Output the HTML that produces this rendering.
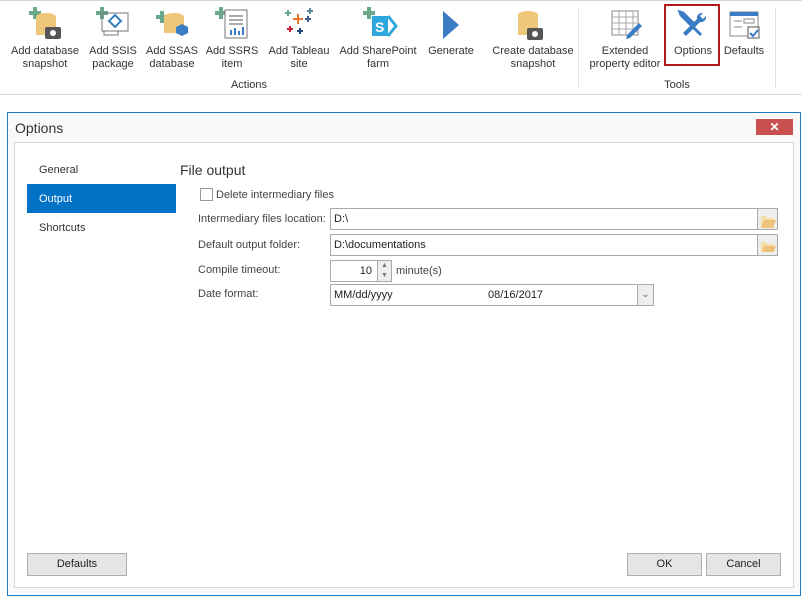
<!DOCTYPE html>
<html><head><meta charset="utf-8"><style>
*{box-sizing:border-box;margin:0;padding:0}
body{width:802px;height:596px;background:#fff;font-family:"Liberation Sans",sans-serif;font-size:11px;color:#222;position:relative;overflow:hidden}
.ab{position:absolute}
.rb{position:absolute;top:0;left:0;width:802px;height:95px;border-top:1px solid #d6d6d6;border-bottom:1px solid #d6d6d6;background:#fff}
.btn{position:absolute;top:45px;width:100px;text-align:center;font-size:11px;line-height:13px;color:#333;white-space:nowrap}
.lab{font-size:11px;color:#444}
.inp{position:absolute;height:22px;border:1px solid #a9a9a9;background:#fff;font-size:11px;line-height:20px;padding-left:3px;color:#222}
.fb{position:absolute;width:21px;height:22px;border:1px solid #a9a9a9;background:#eee}
.pb{position:absolute;height:23px;border:1px solid #adadad;background:#e5e5e5;text-align:center;line-height:21px;font-size:11px}
</style></head><body>
<div class="rb"></div>
<div class="ab" style="left:578px;top:8px;width:1px;height:80px;background:#e0e0e0"></div>
<div class="ab" style="left:775px;top:8px;width:1px;height:80px;background:#e0e0e0"></div>
<svg class="ab" style="left:0;top:0" width="802" height="44">
<g fill="#6aa788"><rect x="33" y="7" width="4" height="12"/><rect x="29" y="11" width="12" height="4"/>
<rect x="100" y="7" width="4" height="12"/><rect x="96" y="11" width="12" height="4"/>
<rect x="160" y="11" width="4" height="12"/><rect x="156" y="15" width="12" height="4"/>
<rect x="219" y="7" width="4" height="12"/><rect x="215" y="11" width="12" height="4"/>
<rect x="367" y="7" width="4" height="12"/><rect x="363" y="11" width="12" height="4"/></g>
<ellipse cx="46" cy="17" rx="10" ry="4" fill="#f0c674"/><rect x="36" y="17" width="20" height="18" fill="#efc77a"/>
<rect x="45" y="27" width="16" height="12" rx="2" fill="#555"/><circle cx="53" cy="33" r="3" fill="#fff"/>
<rect x="102" y="13" width="26" height="18" fill="none" stroke="#777"/><rect x="104" y="31" width="14" height="4" fill="none" stroke="#777"/>
<path d="M115 15l6 6-6 6-6-6z" fill="none" stroke="#3b7dc4" stroke-width="2"/>
<ellipse cx="174" cy="17" rx="10" ry="4" fill="#f0c674"/><rect x="164" y="17" width="20" height="16" fill="#efc77a"/>
<path d="M182 24l6 3v6l-6 3-6-3v-6z" fill="#3b7dc4"/>
<rect x="225" y="10" width="22" height="28" fill="#fff" stroke="#777"/>
<g stroke="#555"><line x1="229" y1="16" x2="243" y2="16"/><line x1="229" y1="20" x2="243" y2="20"/><line x1="229" y1="24" x2="243" y2="24"/></g>
<g fill="#3b7dc4"><rect x="230" y="30" width="2" height="5"/><rect x="234" y="28" width="2" height="7"/><rect x="238" y="31" width="2" height="4"/><rect x="242" y="27" width="2" height="8"/></g>
<g stroke-width="2"><path d="M298 14v10M293 19h10" stroke="#e8762d"/><path d="M288 10v6M285 13h6" stroke="#6aa788"/><path d="M308 16v6M305 19h6" stroke="#3b5c8c"/><path d="M290 26v6M287 29h6" stroke="#c72037"/><path d="M300 28v6M297 31h6" stroke="#1f457e"/><path d="M310 8v6M307 11h6" stroke="#5b879b"/></g>
<rect x="372" y="16" width="16" height="20" fill="#2ea7dc"/><text x="375" y="32" font-size="14" fill="#fff" font-weight="bold" font-family="Liberation Sans">S</text>
<path d="M388 16l8 10-8 10" fill="none" stroke="#2ea7dc" stroke-width="3"/>
<path d="M443 11l16 14-16 14z" fill="#3b7dc4"/>
<ellipse cx="528" cy="15" rx="10" ry="4" fill="#f0c674"/><rect x="518" y="15" width="20" height="20" fill="#efc77a"/>
<rect x="527" y="28" width="16" height="12" rx="2" fill="#555"/><circle cx="535" cy="34" r="3" fill="#fff"/>
<rect x="612" y="11" width="26" height="24" fill="none" stroke="#888"/>
<g stroke="#aaa"><line x1="612" y1="17" x2="638" y2="17"/><line x1="612" y1="23" x2="638" y2="23"/><line x1="612" y1="29" x2="638" y2="29"/><line x1="619" y1="11" x2="619" y2="35"/><line x1="626" y1="11" x2="626" y2="35"/><line x1="633" y1="11" x2="633" y2="35"/></g>
<path d="M627 35l12-12 3 3-12 12-4 1z" fill="#3b7dc4"/>
<path d="M703 13a5 5 0 0 0-6 6l-14 14 3 3 14-14a5 5 0 0 0 6-6l-3 3-3-3z" fill="#3b7dc4"/>
<path d="M680 12l3 1 9 9-2 2-9-9z M692 26l9 9" stroke="#3b7dc4" stroke-width="3" fill="none"/>
<rect x="730" y="12" width="28" height="24" fill="#fff" stroke="#888"/><rect x="730" y="12" width="28" height="4" fill="#3b7dc4"/>
<g stroke="#888"><line x1="734" y1="21" x2="742" y2="21"/><rect x="744" y="19" width="10" height="4" fill="none"/><line x1="734" y1="27" x2="742" y2="27"/></g>
<rect x="748" y="27" width="11" height="11" fill="#fff" stroke="#555"/><path d="M750 33l3 3 5-6" stroke="#3b7dc4" stroke-width="2" fill="none"/>
</svg>
<div class="btn" style="left:-5px">Add database<br>snapshot</div>
<div class="btn" style="left:63px">Add SSIS<br>package</div>
<div class="btn" style="left:122px">Add SSAS<br>database</div>
<div class="btn" style="left:182px">Add SSRS<br>item</div>
<div class="btn" style="left:249px">Add Tableau<br>site</div>
<div class="btn" style="left:328px">Add SharePoint<br>farm</div>
<div class="btn" style="left:401px">Generate</div>
<div class="btn" style="left:483px">Create database<br>snapshot</div>
<div class="btn" style="left:575px">Extended<br>property editor</div>
<div class="btn" style="left:643px">Options</div>
<div class="btn" style="left:694px">Defaults</div>
<div class="ab" style="left:664px;top:4px;width:56px;height:62px;border:2px solid #b31b1b"></div>
<div class="btn" style="left:199px;top:79px">Actions</div>
<div class="btn" style="left:627px;top:79px">Tools</div>
<div class="ab" style="left:7px;top:112px;width:794px;height:484px;border:1px solid #1a7bc9;background:#f9f9f9"></div>
<div class="ab" style="left:15px;top:120px;font-size:14px;color:#333">Options</div>
<div class="ab" style="left:756px;top:119px;width:37px;height:16px;background:#c9504f;color:#fff;text-align:center;font-size:12px;line-height:16px;font-weight:bold">✕</div>
<div class="ab" style="left:14px;top:142px;width:780px;height:446px;border:1px solid #d6d6d6;background:#fff"></div>
<div class="ab lab" style="left:39px;top:164px;color:#333">General</div>
<div class="ab" style="left:27px;top:184px;width:149px;height:29px;background:#0072c6;color:#fff;padding:9px 0 0 12px">Output</div>
<div class="ab lab" style="left:39px;top:222px;color:#333">Shortcuts</div>
<div class="ab" style="left:180px;top:162px;font-size:14px;color:#333">File output</div>
<div class="ab" style="left:200px;top:188px;width:13px;height:13px;border:1px solid #999;background:#fff"></div>
<div class="ab lab" style="left:216px;top:189px">Delete intermediary files</div>
<div class="ab lab" style="left:198px;top:213px">Intermediary files location:</div>
<div class="inp" style="left:330px;top:208px;width:428px">D:\</div>
<div class="fb" style="left:757px;top:208px"></div>
<div class="ab lab" style="left:198px;top:239px">Default output folder:</div>
<div class="inp" style="left:330px;top:234px;width:428px">D:\documentations</div>
<div class="fb" style="left:757px;top:234px"></div>
<svg class="ab" style="left:760px;top:212px" width="16" height="40"><path d="M1 4h5l1 2h7v10H1z" fill="#f7dfa8"/><path d="M1 16l3-8h12l-3 8z" fill="#eec27a"/><path d="M1 30h5l1 2h7v10H1z" fill="#f7dfa8"/><path d="M1 42l3-8h12l-3 8z" fill="#eec27a"/></svg>
<div class="ab lab" style="left:198px;top:264px">Compile timeout:</div>
<div class="inp" style="left:330px;top:260px;width:48px;text-align:right;padding-right:5px">10</div>
<div class="ab" style="left:377px;top:260px;width:15px;height:22px;border:1px solid #a9a9a9;background:#eee;font-size:7px;text-align:center;line-height:10px;color:#777">▲<br>▼</div>
<div class="ab lab" style="left:396px;top:265px">minute(s)</div>
<div class="ab lab" style="left:198px;top:288px">Date format:</div>
<div class="inp" style="left:330px;top:284px;width:308px">MM/dd/yyyy<span style="position:absolute;left:157px">08/16/2017</span></div>
<div class="ab" style="left:637px;top:284px;width:17px;height:22px;border:1px solid #a9a9a9;background:#eee;text-align:center;line-height:20px;font-size:10px;color:#666">⌄</div>
<div class="pb" style="left:27px;top:553px;width:100px">Defaults</div>
<div class="pb" style="left:627px;top:553px;width:75px">OK</div>
<div class="pb" style="left:706px;top:553px;width:75px">Cancel</div>
</body></html>
